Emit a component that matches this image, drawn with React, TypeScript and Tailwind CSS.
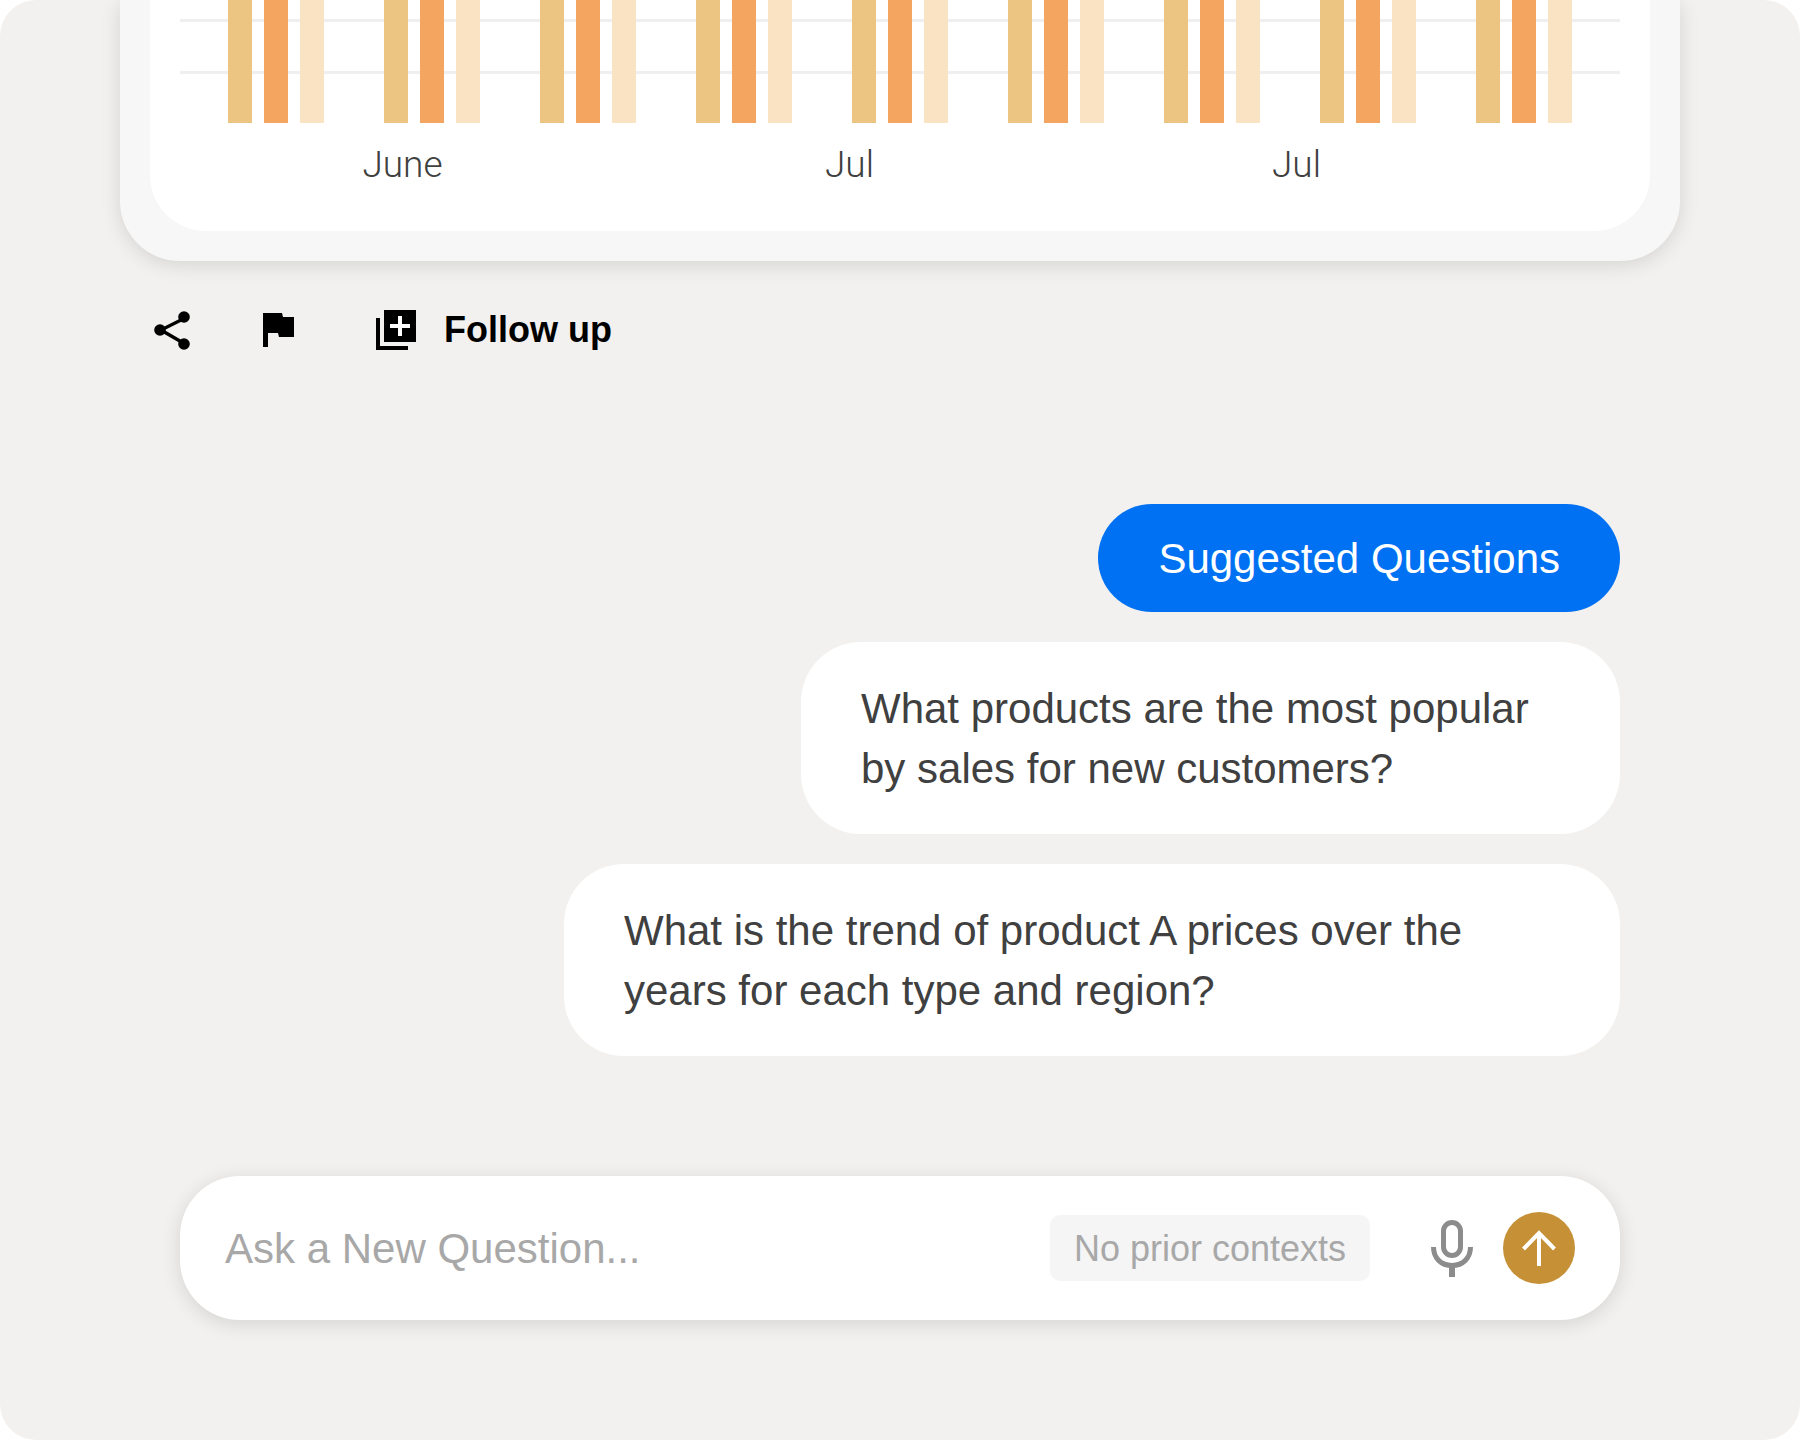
const GROUPS = [0, 1, 2, 3, 4, 5, 6, 7, 8];
const MONTHS = ["June", "Jul", "Jul"];

function ShareIcon() {
  return (
    <svg width="40" height="40" viewBox="0 0 40 40" fill="#000" className="shrink-0">
      <path d="M32 8 L8 20 L32 34" fill="none" stroke="#000" strokeWidth="3.4" />
      <circle cx="31" cy="7" r="5.8" />
      <circle cx="7" cy="20" r="5.8" />
      <circle cx="31" cy="34" r="5.8" />
    </svg>
  );
}

function FlagIcon() {
  return (
    <svg width="32" height="36" viewBox="0 0 32 36" fill="#000" className="shrink-0">
      <path d="M0 1 H19 L20 5 H31 V25 H16 L15 21 H5 V35 H0 Z" />
    </svg>
  );
}

function FollowUpIcon() {
  return (
    <svg width="40" height="40" viewBox="0 0 40 40" className="shrink-0">
      <path d="M0 8 H4 V36 H32 V40 H0 Z" fill="#000" />
      <rect x="8" y="0" width="32" height="32" fill="#000" />
      <path d="M24 6 V26 M14 16 H34" stroke="#fff" strokeWidth="4" />
    </svg>
  );
}

function MicIcon() {
  return (
    <svg width="42" height="57" viewBox="0 0 42 57" fill="none" stroke="#8c8c8c" className="shrink-0">
      <rect x="12.5" y="2.5" width="17" height="33" rx="8.5" strokeWidth="5" />
      <path d="M2.5 27 C2.5 38 10 45.500 21 45.500 C32 45.500 39.500 38 39.500 27" strokeWidth="5" />
      <path d="M21 45 V57" strokeWidth="6" />
    </svg>
  );
}

function SendButton() {
  return (
    <div className="flex h-[72px] w-[72px] shrink-0 items-center justify-center rounded-full bg-[#c69037]">
      <svg width="36" height="38" viewBox="0 0 36 38" fill="none" stroke="#fff" strokeWidth="4">
        <path d="M18 3 V37" />
        <path d="M2.500 20 L18 4 L33.500 20" />
      </svg>
    </div>
  );
}

function Chart() {
  return (
    <div className="rounded-b-[56px] bg-white pb-[42px] pl-[30px] pr-[30px]">
      <div className="relative h-[123px]">
        <div className="absolute left-0 right-0 top-[19px] h-[3px] bg-[#efefef]" />
        <div className="absolute left-0 right-0 top-[71px] h-[3px] bg-[#efefef]" />
        <div className="relative flex h-full gap-[60px] pl-[48px]">
          {GROUPS.map((g) => (
            <div key={g} className="flex h-full gap-[12px]">
              <div className="h-full w-[24px] bg-[#edc583]" />
              <div className="h-full w-[24px] bg-[#f4a660]" />
              <div className="h-full w-[24px] bg-[#fae3c2]" />
            </div>
          ))}
        </div>
      </div>
      <div className="-ml-[1px] grid grid-cols-[447px_447px_447px] pt-[18px] font-['Roboto',sans-serif] text-[37px] font-light leading-[48px] text-[#404040]">
        {MONTHS.map((m, i) => (
          <div key={i} className="text-center">
            {m}
          </div>
        ))}
      </div>
    </div>
  );
}

export default function App() {
  return (
    <div className="h-[1440px] w-[1800px] overflow-hidden bg-white font-['Liberation_Sans',sans-serif]">
      <div className="h-full overflow-hidden rounded-[36px] bg-[#f2f1ef]">
        <div className="mx-[120px] rounded-b-[60px] bg-[#f7f7f7] px-[30px] pb-[30px] shadow-[0_4px_20px_rgba(0,0,0,0.12)]">
          <Chart />
        </div>

        <div className="ml-[153px] mt-[49px] flex h-[40px] items-center">
          <ShareIcon />
          <div className="ml-[70px]">
            <FlagIcon />
          </div>
          <div className="ml-[81px]">
            <FollowUpIcon />
          </div>
          <span className="ml-[28px] text-[36px] font-bold leading-[40px] text-black">Follow up</span>
        </div>

        <div className="mr-[180px] mt-[154px] flex flex-col items-end gap-[30px]">
          <div className="rounded-[54px] bg-[#0071f2] px-[60px] pb-[23px] pt-[25px] text-[42px] leading-[60px] text-white">
            Suggested Questions
          </div>
          <div className="w-[819px] rounded-[60px] bg-white px-[60px] pb-[35px] pt-[37px] text-[42px] leading-[60px] text-[#404040]">
            What products are the most popular
            <br />
            by sales for new customers?
          </div>
          <div className="w-[1056px] rounded-[60px] bg-white px-[60px] pb-[35px] pt-[37px] text-[42px] leading-[60px] text-[#404040]">
            What is the trend of product A prices over the
            <br />
            years for each type and region?
          </div>
        </div>

        <div className="mx-[180px] mt-[120px] flex h-[144px] items-center rounded-[60px] bg-white pl-[45px] pr-[45px] shadow-[0_4px_20px_rgba(0,0,0,0.12)]">
          <span className="flex-1 text-[42px] text-[#a8a8a8]">Ask a New Question...</span>
          <div className="flex h-[66px] w-[320px] items-center justify-center rounded-[10px] bg-[#f5f5f5] pt-[1px] text-[36px] text-[#a8a8a8]">
            No prior contexts
          </div>
          <div className="ml-[61px]">
            <MicIcon />
          </div>
          <div className="ml-[30px]">
            <SendButton />
          </div>
        </div>
      </div>
    </div>
  );
}
